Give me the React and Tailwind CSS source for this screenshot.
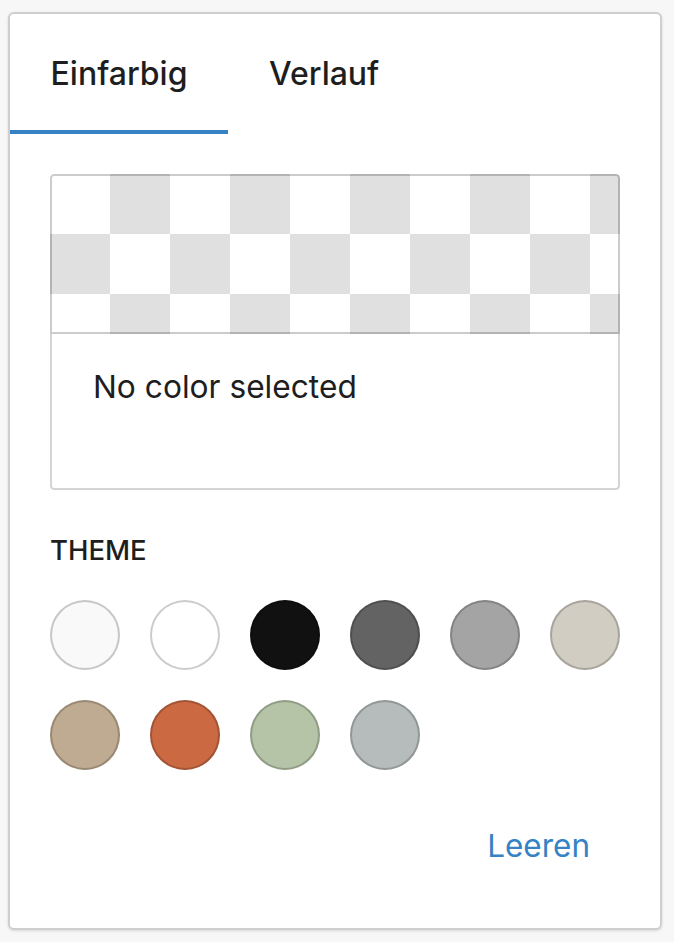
const swatches = [
  "#f9f9f9",
  "#ffffff",
  "#111111",
  "#636363",
  "#a4a4a4",
  "#d1cdc3",
  "#bfab91",
  "#cb6942",
  "#b5c4a7",
  "#b6bcbc",
];

const font = { fontFamily: "Inter, 'Noto Sans', sans-serif" };

export default function App() {
  return (
    <div className="w-[674px] h-[942px] bg-[#f7f7f7] pt-[12px] pl-[8px]" style={font}>
      <div className="w-[654px] h-[918px] bg-white border-2 border-[#cfcfcf] rounded-[6px] shadow-[0_1px_3px_rgba(0,0,0,0.12)] flex flex-col">
        {/* TABS */}
        <div className="flex h-[120px]">
          <div className="w-[218px] flex items-center justify-center border-b-4 border-[#3582c4] pt-[4px] text-[32px] font-medium text-[#1e1e1e]">
            Einfarbig
          </div>
          <div className="flex items-center pl-[41px] text-[32px] font-medium text-[#1e1e1e]">
            Verlauf
          </div>
        </div>

        <div className="px-[40px] pt-[40px] flex flex-col">
          {/* COLOR PREVIEW */}
          <div className="rounded-[4px] overflow-hidden">
            <div className="h-[160px] bg-[repeating-conic-gradient(#e0e0e0_0_25%,#ffffff_0_50%)] bg-[length:120px_120px] shadow-[inset_0_0_0_2px_rgba(0,0,0,0.2)] rounded-t-[4px]" />
            <div className="h-[156px] border-2 border-t-0 border-[#d4d4d4] rounded-b-[4px] pl-[41px] pt-[31px] text-[31.7px] leading-[44px] text-[#1e1e1e]">
              No color selected
            </div>
          </div>

          {/* THEME */}
          <div className="mt-[44px] text-[27.5px] leading-[32px] font-medium uppercase text-[#1e1e1e]">
            Theme
          </div>
          <div className="mt-[34px] grid grid-cols-6 gap-[30px]">
            {swatches.map((c) => (
              <div
                key={c}
                className="w-[70px] h-[70px] rounded-full shadow-[inset_0_0_0_2px_rgba(0,0,0,0.2)]"
                style={{ backgroundColor: c }}
              />
            ))}
          </div>

          {/* CLEAR */}
          <div className="mt-[56px] flex justify-end pr-[30px]">
            <button type="button" className="text-[31.5px] leading-[40px] text-[#3582c4]">
              Leeren
            </button>
          </div>
        </div>
      </div>
    </div>
  );
}
